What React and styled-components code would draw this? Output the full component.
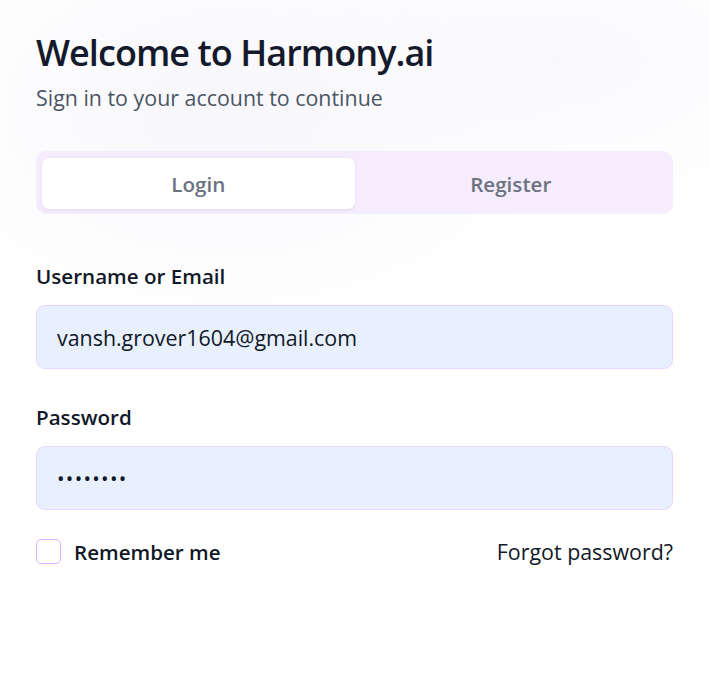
import React, { useState } from 'react'
import styled, { createGlobalStyle } from 'styled-components'

const GlobalStyle = createGlobalStyle`
  html, body {
    margin: 0;
    padding: 0;
    background: #ffffff;
  }
  body {
    font-family: "Open Sans", "Noto Sans", sans-serif;
    color: #111827;
  }
`

const Page = styled.div`
  min-height: 684px;
  background:
    radial-gradient(ellipse 340px 220px at 230px 110px, #f7f7fc 0%, rgba(255, 255, 255, 0) 100%),
    radial-gradient(ellipse 300px 160px at 560px 60px, #f9f9fd 0%, rgba(255, 255, 255, 0) 100%),
    #ffffff;
  padding: 31px 36px;
  box-sizing: border-box;
`

const Title = styled.h1`
  margin: 0;
  font-size: 36px;
  line-height: 44px;
  font-weight: 600;
  color: #141a2c;
  letter-spacing: -0.95px;
`

const Subtitle = styled.p`
  margin: 9px 0 0;
  font-size: 21.4px;
  line-height: 28px;
  color: #4b5563;
`

const Tabs = styled.div`
  margin-top: 39px;
  display: grid;
  grid-template-columns: 1fr 1fr;
  padding: 7px 6px 5px;
  background: #f5edfd;
  border-radius: 10px;
`

const Tab = styled.button`
  height: 51px;
  border: none;
  border-radius: 7px;
  font-family: inherit;
  font-size: 20.6px;
  font-weight: 600;
  color: #6b7280;
  background: ${p => (p.active ? '#ffffff' : 'transparent')};
  box-shadow: ${p => (p.active ? '0 1px 3px rgba(140, 110, 200, 0.18)' : 'none')};
  cursor: pointer;
`

const Field = styled.div`
  margin-top: ${p => p.top}px;
  display: flex;
  flex-direction: column;
`

const Label = styled.label`
  font-size: 20.6px;
  line-height: 28px;
  font-weight: 600;
  color: #111827;
`

const Input = styled.input`
  margin-top: 15px;
  height: 64px;
  box-sizing: border-box;
  padding: 0 20px;
  border: 1px solid #e9d5ff;
  border-radius: 9px;
  background: #e8f0fe;
  font-family: inherit;
  font-size: ${p => (p.type === 'password' ? '20px' : '21.4px')};
  color: #111827;
  outline: none;
  letter-spacing: ${p => (p.type === 'password' ? '1.3px' : '0')};
`

const OptionsRow = styled.div`
  margin-top: 27px;
  display: flex;
  align-items: center;
  justify-content: space-between;
`

const Remember = styled.label`
  display: flex;
  align-items: center;
  gap: 13px;
  font-size: 20.6px;
  font-weight: 600;
  color: #111827;
`

const Box = styled.span`
  width: 25px;
  height: 25px;
  box-sizing: border-box;
  border: 1.5px solid #d8b4fe;
  border-radius: 5px;
  background: #ffffff;
`

const Forgot = styled.a`
  font-size: 21.4px;
  color: #111827;
  text-decoration: none;
`

export default function App() {
  const [tab, setTab] = useState('login')
  return (
    <Page>
      <GlobalStyle />
      <Title>Welcome to Harmony.ai</Title>
      <Subtitle>Sign in to your account to continue</Subtitle>
      <Tabs>
        <Tab active={tab === 'login'} onClick={() => setTab('login')}>Login</Tab>
        <Tab active={tab === 'register'} onClick={() => setTab('register')}>Register</Tab>
      </Tabs>
      <Field top={48}>
        <Label>Username or Email</Label>
        <Input type="text" defaultValue="vansh.grover1604@gmail.com" />
      </Field>
      <Field top={34}>
        <Label>Password</Label>
        <Input type="password" defaultValue="harmony1" />
      </Field>
      <OptionsRow>
        <Remember>
          <Box />
          Remember me
        </Remember>
        <Forgot href="#">Forgot password?</Forgot>
      </OptionsRow>
    </Page>
  )
}
